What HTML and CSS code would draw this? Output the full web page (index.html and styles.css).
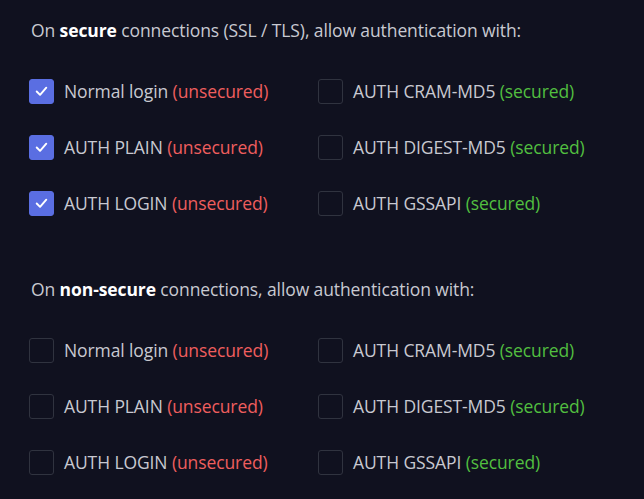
FILE: index.html
```html
<!DOCTYPE html>
<html lang="en">
<head>
<meta charset="utf-8">
<link rel="stylesheet" href="styles.css">
</head>
<body>
<section class="section">
  <p class="heading">On <strong>secure</strong> connections (SSL / TLS), allow authentication with:</p>
  <div class="grid">
    <label class="opt"><span class="box checked"><svg viewBox="0 0 24 24"><path d="M7 12.5 L10.5 16 L17 8.5"/></svg></span>Normal login <span class="bad">(unsecured)</span></label>
    <label class="opt"><span class="box"></span>AUTH CRAM-MD5 <span class="good">(secured)</span></label>
    <label class="opt"><span class="box checked"><svg viewBox="0 0 24 24"><path d="M7 12.5 L10.5 16 L17 8.5"/></svg></span>AUTH PLAIN <span class="bad">(unsecured)</span></label>
    <label class="opt"><span class="box"></span>AUTH DIGEST-MD5 <span class="good">(secured)</span></label>
    <label class="opt"><span class="box checked"><svg viewBox="0 0 24 24"><path d="M7 12.5 L10.5 16 L17 8.5"/></svg></span>AUTH LOGIN <span class="bad">(unsecured)</span></label>
    <label class="opt"><span class="box"></span>AUTH GSSAPI <span class="good">(secured)</span></label>
  </div>
</section>
<section class="section second">
  <p class="heading">On <strong>non-secure</strong> connections, allow authentication with:</p>
  <div class="grid">
    <label class="opt"><span class="box"></span>Normal login <span class="bad">(unsecured)</span></label>
    <label class="opt"><span class="box"></span>AUTH CRAM-MD5 <span class="good">(secured)</span></label>
    <label class="opt"><span class="box"></span>AUTH PLAIN <span class="bad">(unsecured)</span></label>
    <label class="opt"><span class="box"></span>AUTH DIGEST-MD5 <span class="good">(secured)</span></label>
    <label class="opt"><span class="box"></span>AUTH LOGIN <span class="bad">(unsecured)</span></label>
    <label class="opt"><span class="box"></span>AUTH GSSAPI <span class="good">(secured)</span></label>
  </div>
</section>
</body>
</html>
```
FILE: styles.css
```css
html, body {
  margin: 0;
  padding: 0;
  background: #10111f;
}
body {
  padding: 18px 29px 0;
  font-family: "Open Sans", "Noto Sans", sans-serif;
  font-size: 17.5px;
  letter-spacing: -0.1px;
  color: #c8c9d1;
}
.section.second {
  margin-top: 46px;
}
.heading {
  margin: 0;
  line-height: 24px;
  height: 24px;
  padding-left: 2px;
}
.heading strong {
  color: #ffffff;
  font-weight: 700;
}
.grid {
  margin-top: 21px;
  display: grid;
  grid-template-columns: 289px auto;
  grid-auto-rows: 56px;
}
.opt {
  display: flex;
  align-items: center;
  white-space: pre;
}
.box {
  width: 25px;
  height: 25px;
  box-sizing: border-box;
  border: 1px solid #30333f;
  border-radius: 3px;
  margin-right: 10px;
  display: flex;
  align-items: center;
  justify-content: center;
}
.box.checked {
  background: #5a6ee2;
  border-color: #5a6ee2;
}
.box svg {
  width: 24px;
  height: 24px;
  fill: none;
  stroke: #ffffff;
  stroke-width: 2;
  stroke-linecap: round;
  stroke-linejoin: round;
}
.bad {
  color: #ee5e5e;
}
.good {
  color: #52bf40;
}
```
